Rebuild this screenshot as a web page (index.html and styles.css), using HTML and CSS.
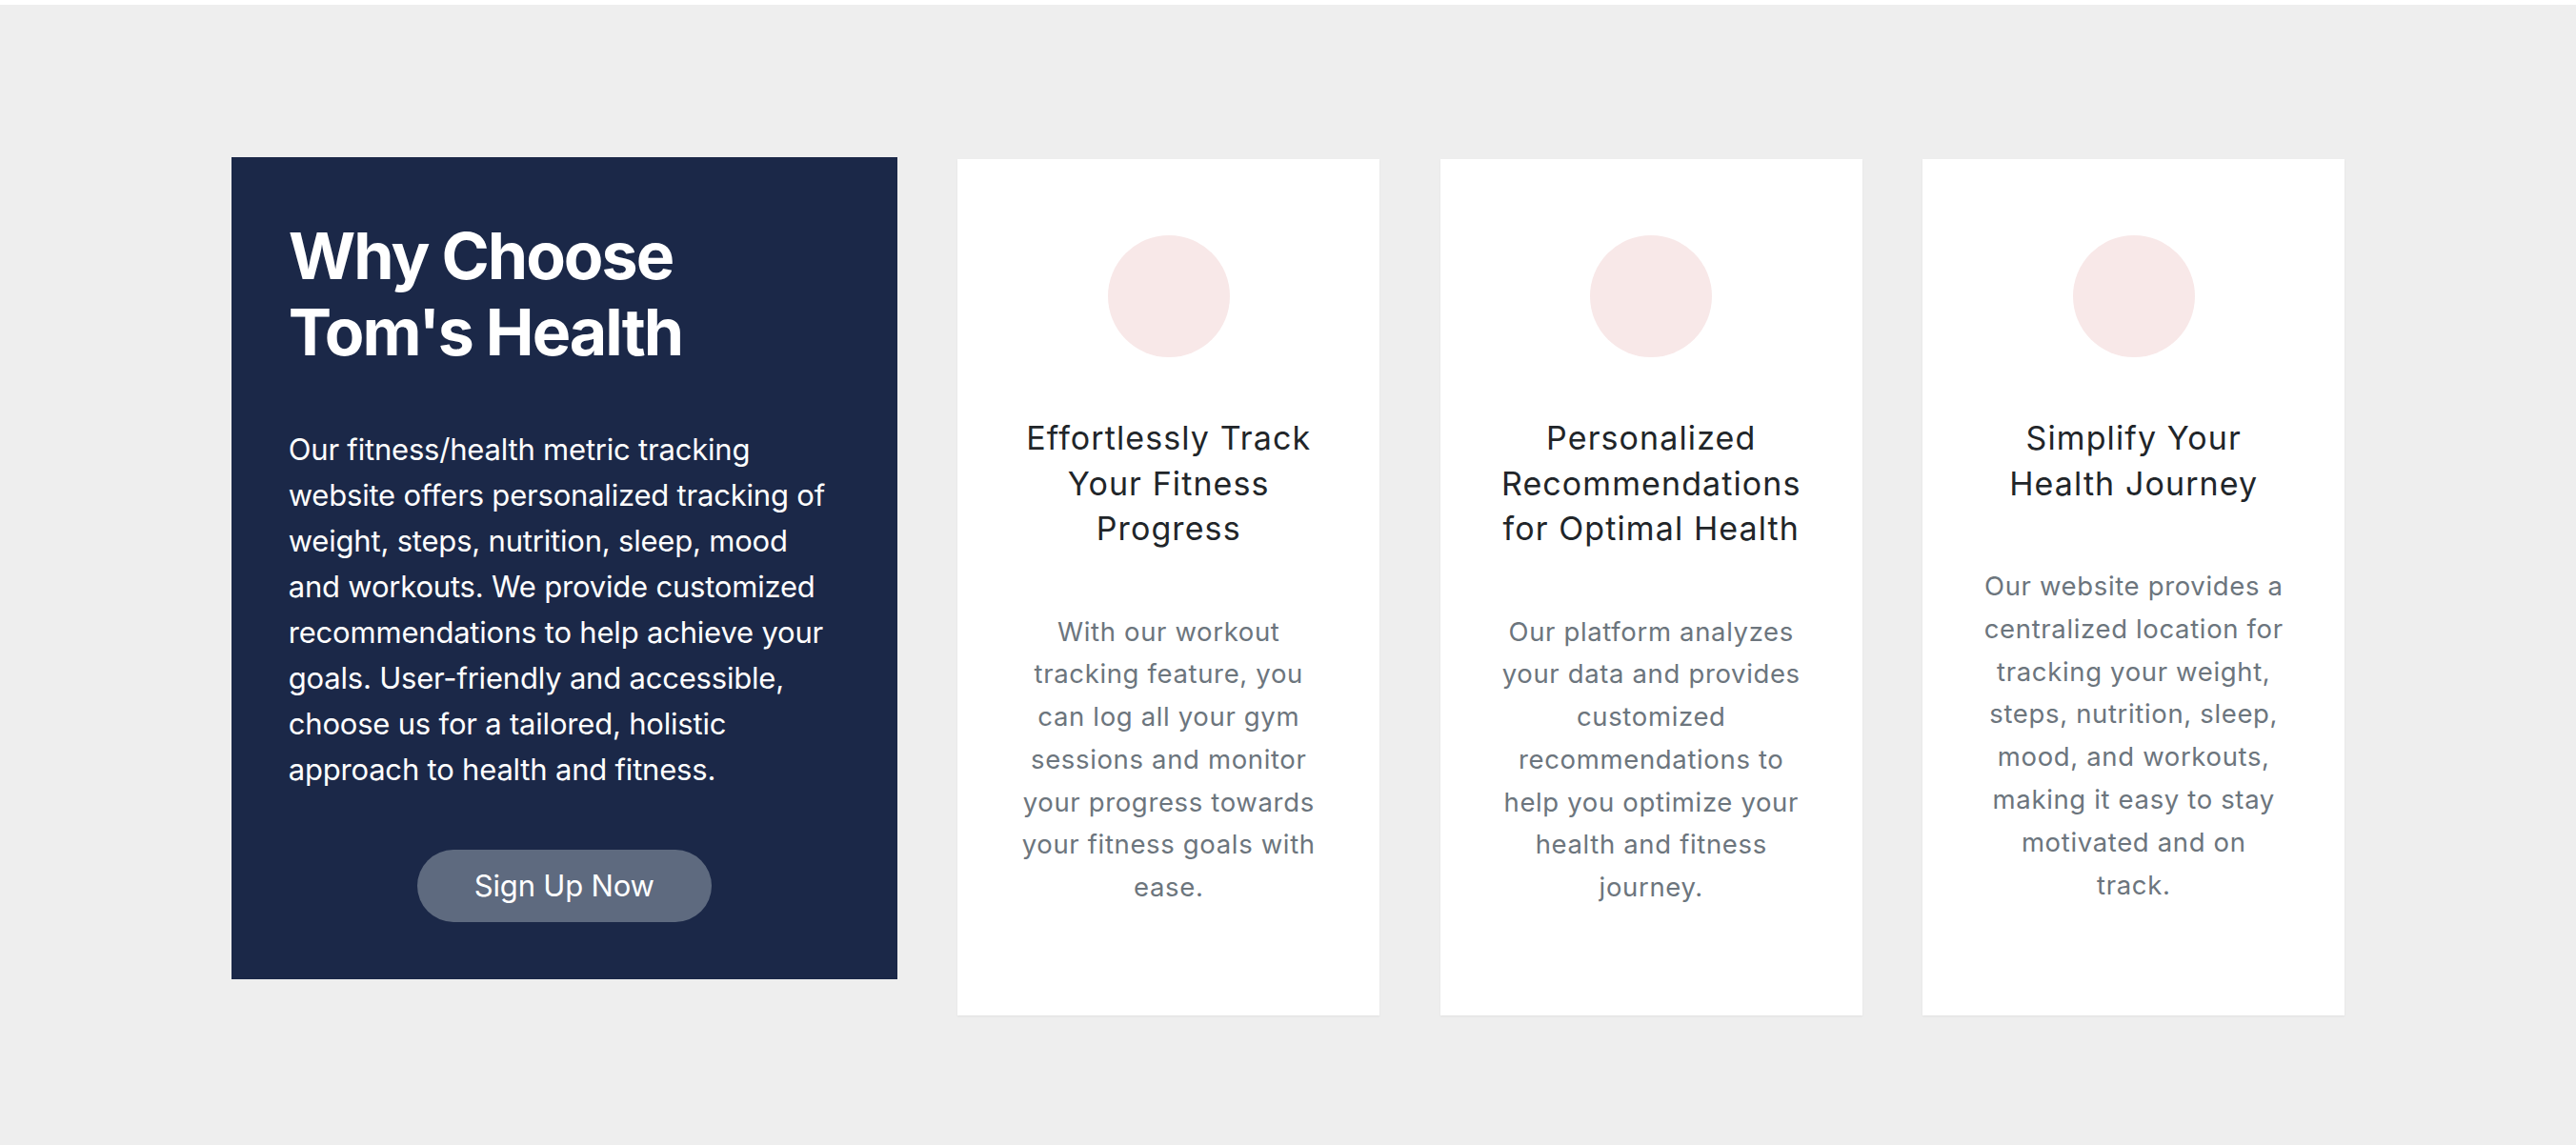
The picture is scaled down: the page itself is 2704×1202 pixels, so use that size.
FILE: index.html
```html
<!DOCTYPE html>
<html lang="en">
<head>
    <meta charset="UTF-8">
    <meta name="viewport" content="width=device-width, initial-scale=1.0">
    <title>Why Choose Tom's Health</title>
    <link rel="stylesheet" href="styles.css">
</head>
<body>
    <section class="features">
        <div class="features-row">
            <div class="intro-card">
                <h1>Why Choose Tom's Health</h1>
                <p>Our fitness/health metric tracking website offers personalized tracking of weight, steps, nutrition, sleep, mood and workouts. We provide customized recommendations to help achieve your goals. User-friendly and accessible, choose us for a tailored, holistic approach to health and fitness.</p>
                <div class="intro-action">
                    <a href="#" class="btn-signup">Sign Up Now</a>
                </div>
            </div>

            <div class="feature-list">
                <div class="feature-card">
                    <div class="feature-icon"></div>
                    <h3>Effortlessly Track Your Fitness Progress</h3>
                    <p>With our workout tracking feature, you can log all your gym sessions and monitor your progress towards your fitness goals with ease.</p>
                </div>

                <div class="feature-card">
                    <div class="feature-icon"></div>
                    <h3>Personalized Recommendations for Optimal Health</h3>
                    <p>Our platform analyzes your data and provides customized recommendations to help you optimize your health and fitness journey.</p>
                </div>

                <div class="feature-card">
                    <div class="feature-icon"></div>
                    <h3>Simplify Your Health Journey</h3>
                    <p>Our website provides a centralized location for tracking your weight, steps, nutrition, sleep, mood, and workouts, making it easy to stay motivated and on track.</p>
                </div>
            </div>
        </div>
    </section>
</body>
</html>
```

FILE: styles.css
```css
body {
    margin: 0;
    background: #ffffff;
    font-family: 'Inter', 'Liberation Sans', sans-serif;
    color: #212529;
}

.features {
    margin-top: 5px;
    height: 1197px;
    box-sizing: border-box;
    padding-top: 160px;
    background: #eeeeee;
}

.features-row {
    display: flex;
    justify-content: center;
    align-items: flex-start;
    gap: 63.5px;
}

.intro-card {
    width: 699px;
    box-sizing: border-box;
    padding: 63px 60px 60px;
    background: #1b2848;
    color: #ffffff;
}

.intro-card h1 {
    margin: 0 0 60px;
    font-size: 68px;
    line-height: 80px;
    font-weight: 700;
    letter-spacing: -2px;
}

.intro-card p {
    margin: 0 0 60px;
    font-size: 31px;
    line-height: 48px;
    letter-spacing: -0.2px;
}

.intro-action {
    text-align: center;
}

.btn-signup {
    display: inline-block;
    padding: 14px 60px;
    border-radius: 40px;
    background: #5e6a7f;
    color: #ffffff;
    font-size: 31px;
    line-height: 48px;
    letter-spacing: -0.2px;
    text-decoration: none;
}

.feature-list {
    display: flex;
    gap: 63.5px;
    margin-top: 2px;
}

.feature-card {
    width: 443px;
    box-sizing: border-box;
    padding: 80px 63.5px 112px;
    background: #ffffff;
    text-align: center;
    box-shadow: 0 1px 2px rgba(0,0,0,0.06);
}

.feature-icon {
    width: 128px;
    height: 128px;
    margin: 0 auto 61px;
    border-radius: 50%;
    background: #f8e8e8;
}

.feature-card h3 {
    margin: 0 0 62px;
    font-size: 34px;
    line-height: 47.5px;
    font-weight: 400;
    letter-spacing: 1.1px;
    color: #212529;
}

.feature-card p {
    margin: 0;
    font-size: 27.5px;
    line-height: 44.8px;
    letter-spacing: 0.65px;
    color: #6c757d;
}
```
